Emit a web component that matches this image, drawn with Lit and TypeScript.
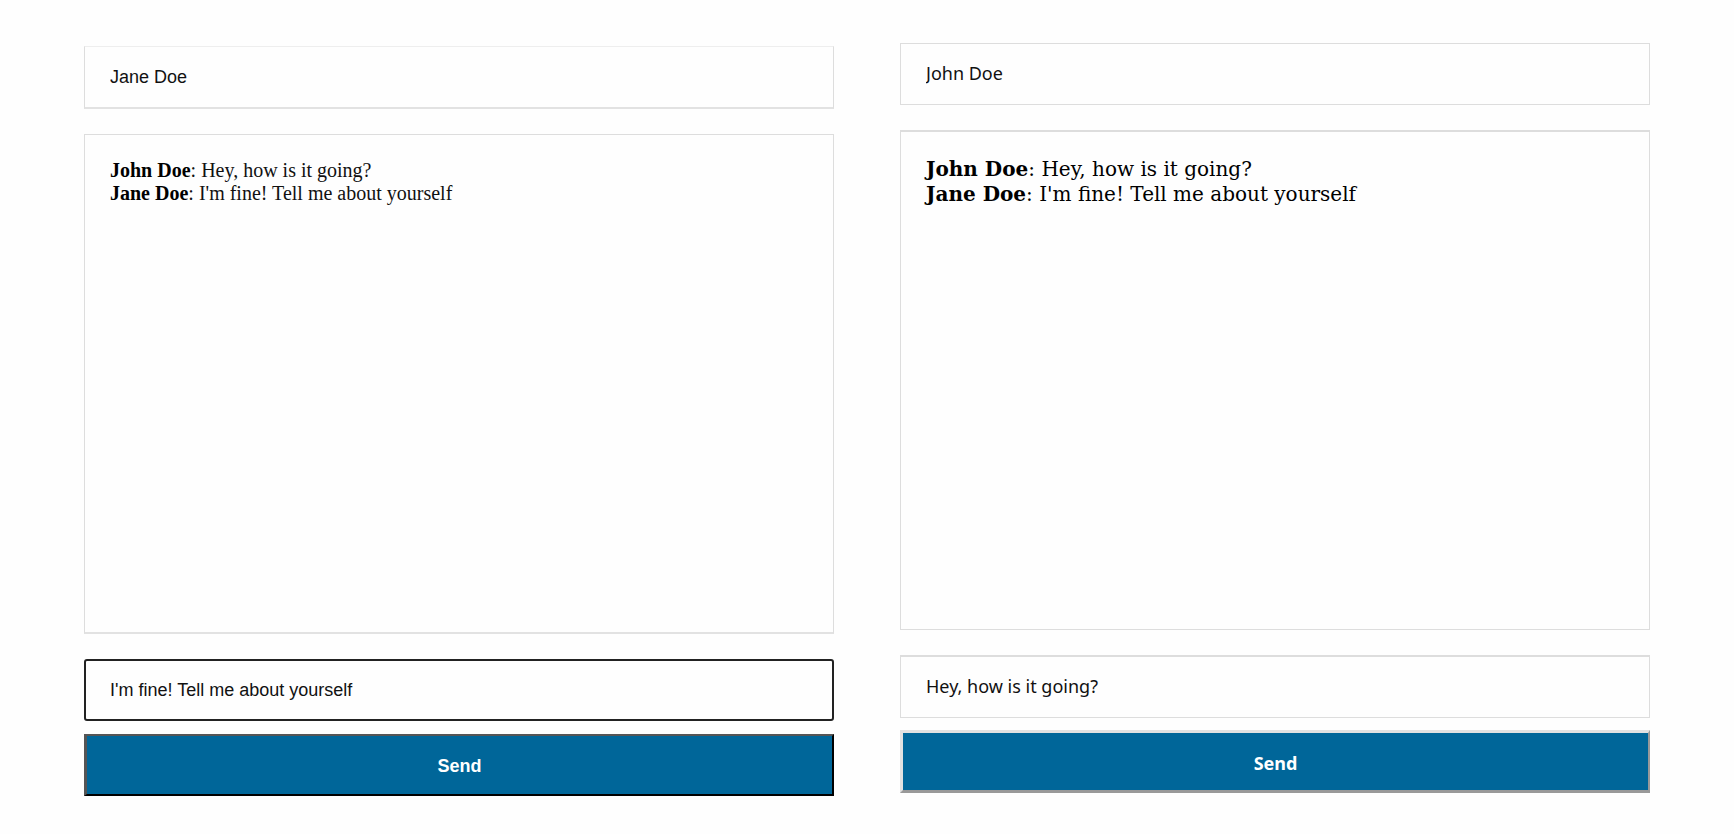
import { LitElement, html, css } from "lit";
import { customElement, property } from "lit/decorators.js";

interface Message {
  author: string;
  text: string;
}

const messages: Message[] = [
  { author: "John Doe", text: "Hey, how is it going?" },
  { author: "Jane Doe", text: "I'm fine! Tell me about yourself" },
];

@customElement("chat-panel")
export class ChatPanel extends LitElement {
  @property() name = "";
  @property() draft = "";
  @property({ attribute: false }) messages: Message[] = [];

  static styles = css`
    :host {
      --line: #dddddd;
      display: block;
      flex: 1 1 0;
      min-width: 0;
    }
    .form {
      display: flex;
      flex-direction: column;
      margin: 0;
    }
    .field,
    .log,
    .send {
      box-sizing: border-box;
      width: 100%;
      margin: 0;
    }
    .field,
    .send {
      height: 62px;
      font-family: "Liberation Sans", Arial, sans-serif;
      font-size: 18px;
    }
    .field {
      padding: 0 25px;
      border: 1px solid var(--line);
      border-radius: 0;
      background: #fefefe;
      color: #111111;
      outline: none;
    }
    .log {
      min-height: 500px;
      margin: 25px 0;
      padding: 24px 25px;
      border: 1px solid var(--line);
      font-family: "Liberation Serif", "Times New Roman", serif;
      font-size: 20px;
      line-height: 23px;
      color: #111111;
      overflow-wrap: anywhere;
    }
    .author {
      color: #000000;
    }
    .send {
      margin-top: 13px;
      padding: 2px 0 0;
      border: 2px solid;
      border-color: #555555 #000000 #000000 #555555;
      border-left-width: 3px;
      background: #006699;
      color: #ffffff;
      font-weight: 700;
    }

    :host([variant="active"]) .name {
      height: 63px;
      border-top-color: #eeeeee;
      border-bottom: 2px solid #e2e2e2;
    }
    :host([variant="active"]) .log {
      border-bottom: 2px solid #e2e2e2;
    }
    :host([variant="active"]) .message {
      padding: 0 24px;
      border: 2px solid #222222;
      border-radius: 3px;
    }

    :host([variant="idle"]) .field,
    :host([variant="idle"]) .send {
      font-family: "Noto Sans", sans-serif;
    }
    :host([variant="idle"]) .field {
      padding-bottom: 2px;
    }
    :host([variant="idle"]) .log {
      padding-top: 25px;
      border-top-width: 2px;
      font-family: "DejaVu Serif", serif;
      line-height: 25px;
      color: #000000;
    }
    :host([variant="idle"]) .message {
      height: 63px;
      border-top-width: 2px;
    }
    :host([variant="idle"]) .send {
      height: 63px;
      margin-top: 12px;
      border-width: 3px 2px 3px 3px;
      border-color: #e1e1e1 #999999 #999999 #e1e1e1;
    }
  `;

  render() {
    return html`
      <form class="form" @submit=${(e: Event) => e.preventDefault()}>
        <input class="field name" type="text" aria-label="Name" .value=${this.name} />
        <div class="log" role="log">
          ${this.messages.map(
            (m) => html`<div><b class="author">${m.author}</b>: ${m.text}</div>`
          )}
        </div>
        <input class="field message" type="text" aria-label="Message" .value=${this.draft} />
        <button class="send" type="submit">Send</button>
      </form>
    `;
  }
}

@customElement("app-root")
export class AppRoot extends LitElement {
  static styles = css`
    :host {
      display: block;
      background: #fefefe;
    }
    .panels {
      display: flex;
      align-items: flex-start;
      gap: 66px;
      padding: 43px 84px 38px;
    }
    .active {
      margin-top: 3px;
    }
  `;

  render() {
    return html`
      <main class="panels">
        <chat-panel
          class="active"
          variant="active"
          name="Jane Doe"
          draft="I'm fine! Tell me about yourself"
          .messages=${messages}
        ></chat-panel>
        <chat-panel
          variant="idle"
          name="John Doe"
          draft="Hey, how is it going?"
          .messages=${messages}
        ></chat-panel>
      </main>
    `;
  }
}
